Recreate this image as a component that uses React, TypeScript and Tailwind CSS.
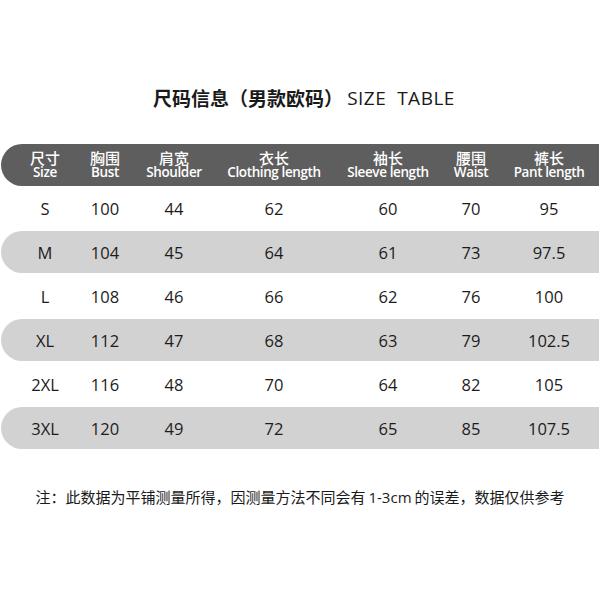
const cols = [
  { zh: "尺寸", en: "Size" },
  { zh: "胸围", en: "Bust" },
  { zh: "肩宽", en: "Shoulder" },
  { zh: "衣长", en: "Clothing length" },
  { zh: "袖长", en: "Sleeve length" },
  { zh: "腰围", en: "Waist" },
  { zh: "裤长", en: "Pant length" },
];

const rows = [
  ["S", "100", "44", "62", "60", "70", "95"],
  ["M", "104", "45", "64", "61", "73", "97.5"],
  ["L", "108", "46", "66", "62", "76", "100"],
  ["XL", "112", "47", "68", "63", "79", "102.5"],
  ["2XL", "116", "48", "70", "64", "82", "105"],
  ["3XL", "120", "49", "72", "65", "85", "107.5"],
];

// column widths picked so each cell's center lands on the reference column center
const grid = "grid grid-cols-[88px_32px_106px_94px_134px_32px_124px]";

export default function App() {
  return (
    <div className="w-[600px] h-[600px] bg-white flex flex-col font-['Open_Sans','Noto_Sans_CJK_SC',sans-serif] text-[#1c1c1c]">
      <div className="mt-[86px] h-[24px] flex items-center justify-center text-[19px] leading-[24px] text-[#1a1a1a] whitespace-nowrap">
        <span className="ml-[8px] font-bold font-['Noto_Sans_CJK_SC',sans-serif]">尺码信息（男款欧码）</span>
        <span className="ml-[4px] tracking-[0.5px]">SIZE&nbsp;&nbsp;TABLE</span>
      </div>

      <div className="mt-[34px] ml-px w-[598px] h-[42px] bg-[#5e5e5e] rounded-l-full rounded-r-[6px] overflow-hidden text-white">
        <div className={`${grid} h-full`}>
          {cols.map((c) => (
            <div key={c.en} className="flex flex-col items-center justify-center gap-px whitespace-nowrap">
              <div className="h-[15px] flex items-center text-[15px] leading-none font-medium font-['Noto_Sans_CJK_SC',sans-serif]">{c.zh}</div>
              <div className="h-[15px] flex items-center text-[13.5px] leading-none font-semibold tracking-[-0.4px]">{c.en}</div>
            </div>
          ))}
        </div>
      </div>

      <div className="flex flex-col">
        {rows.map((r, i) => (
          <div key={r[0]} className="h-[44px] py-px">
            <div
              className={`ml-px w-[598px] h-[42px] rounded-l-full rounded-r-[6px] overflow-hidden ${
                i % 2 === 1 ? "bg-[#d2d2d2]" : "bg-white"
              }`}
            >
              <div className={`${grid} h-full`}>
                {r.map((v, j) => (
                  <div key={j} className="flex items-center justify-center pt-[3px] text-[16.5px] whitespace-nowrap">
                    {v}
                  </div>
                ))}
              </div>
            </div>
          </div>
        ))}
      </div>

      <div className="mt-[37px] h-[20px] flex items-center justify-center text-[15px] leading-[20px] text-[#1a1a1a] whitespace-nowrap font-['Noto_Sans_CJK_SC',sans-serif]">
        注：此数据为平铺测量所得，因测量方法不同会有 <span className="font-['Open_Sans',sans-serif] mx-[3px]">1-3cm</span> 的误差，数据仅供参考
      </div>
    </div>
  );
}
